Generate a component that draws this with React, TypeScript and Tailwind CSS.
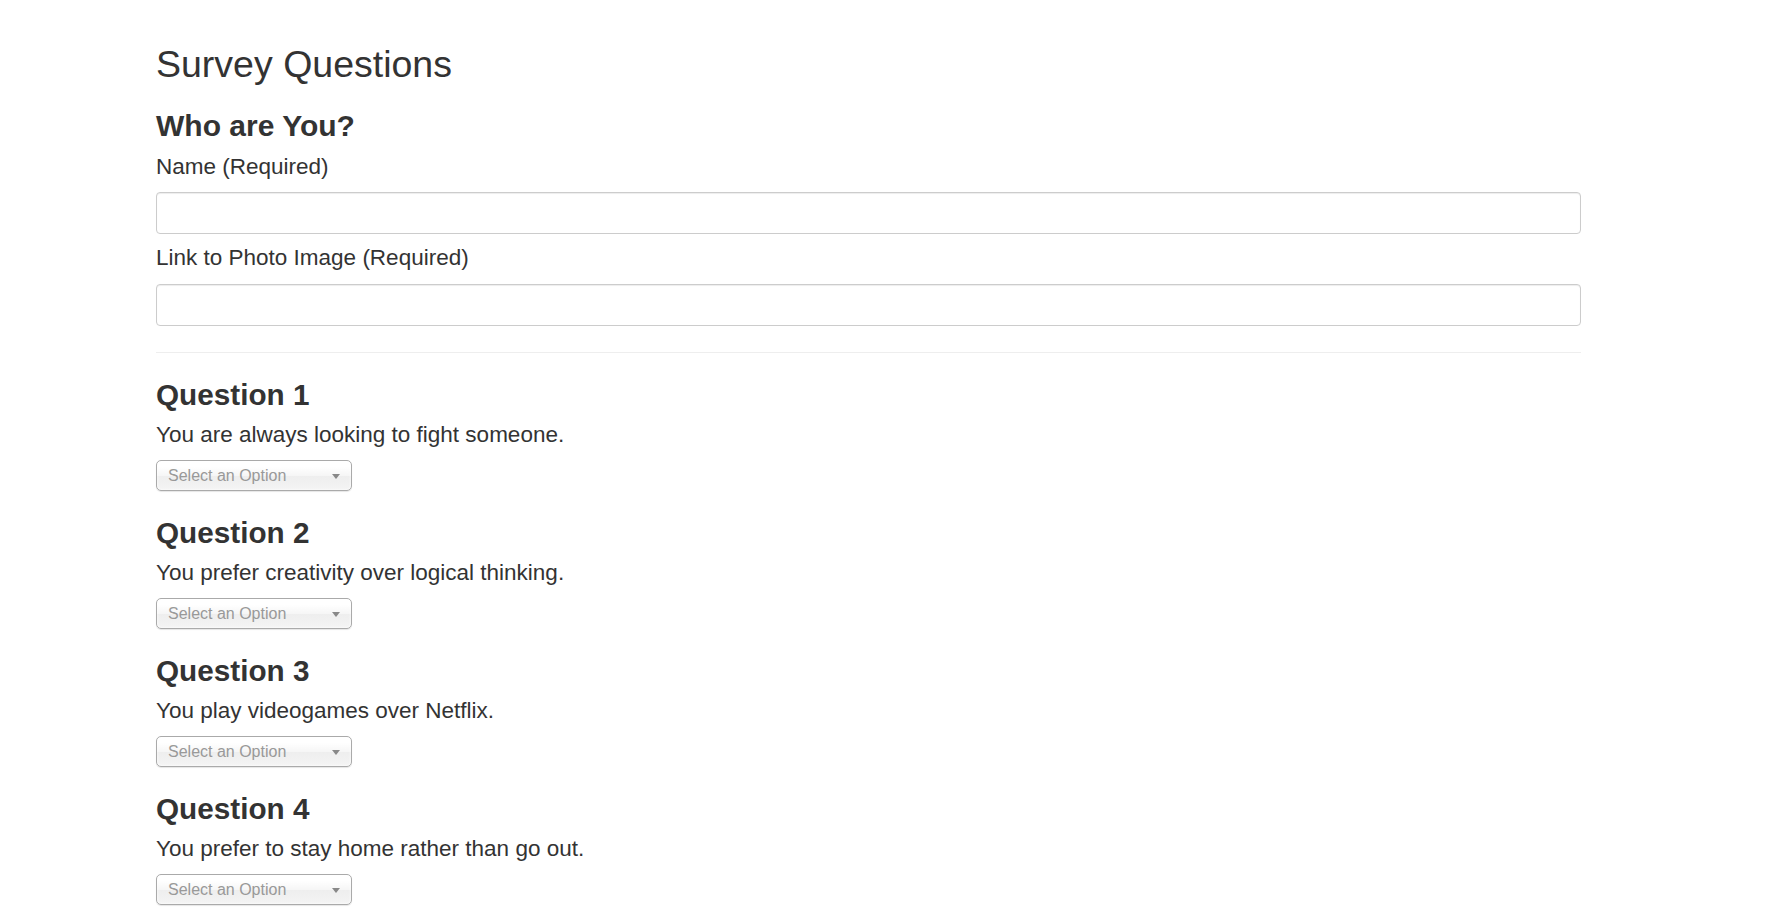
import React from "react";

const questions = [
  "You are always looking to fight someone.",
  "You prefer creativity over logical thinking.",
  "You play videogames over Netflix.",
  "You prefer to stay home rather than go out.",
];

function ChosenSelect() {
  return (
    <div className="mt-[10px] flex h-[31px] w-[196px] items-center justify-between rounded-[5px] border border-[#aaa] bg-[linear-gradient(#fff_20%,#f6f6f6_50%,#eee_52%,#f4f4f4_100%)] pl-[11px] pr-[11px] shadow-[inset_0_0_3px_#fff,0_1px_1px_rgba(0,0,0,0.1)]">
      <span className="text-[16px] leading-[20px] text-[#999]">Select an Option</span>
      <svg width="8" height="5" viewBox="0 0 8 5" className="mt-[1px]">
        <path d="M0 0 L8 0 L4 5 Z" fill="#888" />
      </svg>
    </div>
  );
}

export default function App() {
  return (
    <div
      className="min-h-screen bg-white pl-[156px] pr-[207px] text-[#333]"
      style={{ fontFamily: '"Liberation Sans", Arial, sans-serif' }}
    >
      <h1 className="pt-[44px] text-[37.5px] font-normal leading-[40px]">Survey Questions</h1>
      <h2 className="mt-[26px] text-[30px] font-bold leading-[32px]">Who are You?</h2>
      <label className="mt-[10px] block text-[22.5px] leading-[30px]">Name (Required)</label>
      <input
        type="text"
        className="mt-[10px] block h-[42px] w-full rounded-[4px] border border-[#ccc] shadow-[inset_0_1px_1px_rgba(0,0,0,0.075)]"
      />
      <label className="mt-[9px] block text-[22.5px] leading-[30px]">Link to Photo Image (Required)</label>
      <input
        type="text"
        className="mt-[11px] block h-[42px] w-full rounded-[4px] border border-[#ccc] shadow-[inset_0_1px_1px_rgba(0,0,0,0.075)]"
      />
      <hr className="mt-[26px] border-t border-[#eee]" />
      <div className="flex flex-col">
        {questions.map((q, i) => (
          <div key={i} className="mt-[26px]">
            <h3 className="text-[29.7px] font-bold leading-[32px]">Question {i + 1}</h3>
            <p className="mt-[9px] text-[22.5px] leading-[30px]">{q}</p>
            <ChosenSelect />
          </div>
        ))}
      </div>
      <div className="h-[40px]" />
    </div>
  );
}
